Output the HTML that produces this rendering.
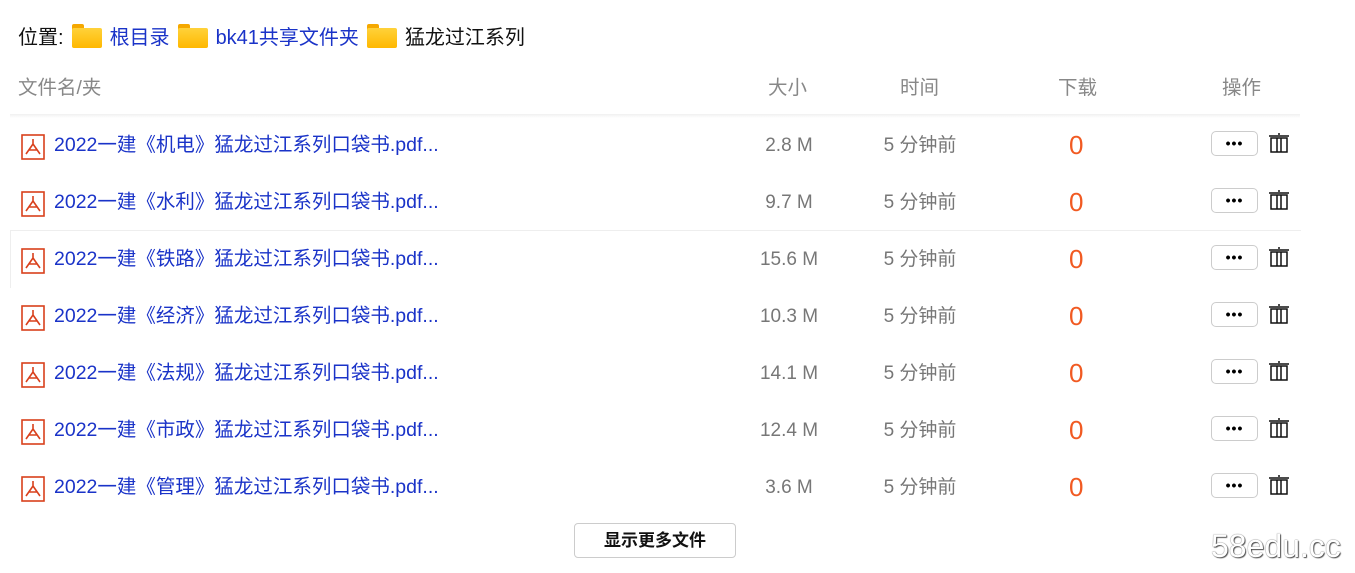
<!DOCTYPE html>
<html><head><meta charset="utf-8"><style>
body{margin:0;width:1355px;height:573px;background:#fff;font-family:"Liberation Sans","Noto Sans CJK SC",sans-serif;position:relative;overflow:hidden}
.a{position:absolute;white-space:nowrap}
.loc{top:21px;left:18px;font-size:20px;color:#111;display:flex;align-items:center;gap:6px}
.loc a{color:#1a33c8}
.fd{width:30px;height:24px;display:inline-block;position:relative;margin:0 2px}
.fd:before{content:"";position:absolute;left:0;top:0;width:12px;height:6px;background:#f5a800;border-radius:2px 2px 0 0}
.fd:after{content:"";position:absolute;left:0;top:4px;width:30px;height:20px;background:linear-gradient(#ffd23a,#ffb800);border-radius:2px}
.h{top:71px;font-size:19.5px;color:#888}
.sep{position:absolute;left:10px;top:114px;width:1290px;height:4px;background:linear-gradient(#f0f0f0,#fff)}
.row{position:absolute;left:0;width:1300px;height:57px}
.row .a{line-height:1}
.nm{left:54px;top:20px;font-size:19.5px;color:#1a33c8}
.ic{left:21px;top:18px}
.sz{width:100px;left:739px;text-align:center;top:20px;font-size:19px;color:#777}
.tm{width:120px;left:860px;text-align:center;top:20px;font-size:19px;color:#777}
.dl{left:1069px;top:16px;font-size:26px;color:#f15a22}
.row .bt{left:1211px;top:15px;width:47px;height:25px;border:1px solid #ccc;border-radius:5px;box-sizing:border-box;text-align:center;font-size:14px;line-height:22px;font-weight:bold;color:#000;letter-spacing:1px}
.tr{left:1268px;top:16px}
.more{left:574px;top:523px;width:162px;height:35px;border:1px solid #ccc;border-radius:4px;box-sizing:border-box;text-align:center;line-height:33px;font-weight:bold;font-size:17px;color:#111}
.wm{left:1211px;top:528px;font-size:32px;color:#fff;text-shadow:0 0 1px #333,1px 1px 1px #555}
</style></head><body>
<div class="a loc">位置: <span class="fd"></span><a>根目录</a><span class="fd"></span><a>bk41共享文件夹</a><span class="fd"></span><span>猛龙过江系列</span></div>
<div class="a h" style="left:18px">文件名/夹</div>
<div class="a h" style="left:768px">大小</div>
<div class="a h" style="left:900px">时间</div>
<div class="a h" style="left:1058px">下载</div>
<div class="a h" style="left:1222px">操作</div>
<div class="sep"></div>

<div class="row" style="top:116px">
<svg class="a ic" width="24" height="26" viewBox="0 0 24 26"><rect x="1" y="1" width="22" height="24" fill="none" stroke="#d9401c" stroke-width="1.6"/><path d="M12 5V10M12 10L5 20M12 10L19 20M8 16H16" stroke="#d9401c" stroke-width="1.6" fill="none"/></svg>
<div class="a nm">2022一建《机电》猛龙过江系列口袋书.pdf...</div><div class="a sz">2.8 M</div><div class="a tm">5 分钟前</div><div class="a dl">0</div><div class="a bt">•••</div>
<svg class="a tr" width="22" height="22" viewBox="0 0 22 22"><path d="M1 4H21M10 2H12M3 6H19V20H3ZM9 6V20M13 6V20" stroke="#111" stroke-width="1.5" fill="none"/></svg></div>

<div class="row" style="top:173px">
<svg class="a ic" width="24" height="26" viewBox="0 0 24 26"><rect x="1" y="1" width="22" height="24" fill="none" stroke="#d9401c" stroke-width="1.6"/><path d="M12 5V10M12 10L5 20M12 10L19 20M8 16H16" stroke="#d9401c" stroke-width="1.6" fill="none"/></svg>
<div class="a nm">2022一建《水利》猛龙过江系列口袋书.pdf...</div><div class="a sz">9.7 M</div><div class="a tm">5 分钟前</div><div class="a dl">0</div><div class="a bt">•••</div>
<svg class="a tr" width="22" height="22" viewBox="0 0 22 22"><path d="M1 4H21M10 2H12M3 6H19V20H3ZM9 6V20M13 6V20" stroke="#111" stroke-width="1.5" fill="none"/></svg></div>

<div style="position:absolute;left:10px;top:230px;width:1290px;height:57px;border-top:1px solid #eee;border-left:1px solid #eee"></div>
<div class="row" style="top:230px">
<svg class="a ic" width="24" height="26" viewBox="0 0 24 26"><rect x="1" y="1" width="22" height="24" fill="none" stroke="#d9401c" stroke-width="1.6"/><path d="M12 5V10M12 10L5 20M12 10L19 20M8 16H16" stroke="#d9401c" stroke-width="1.6" fill="none"/></svg>
<div class="a nm">2022一建《铁路》猛龙过江系列口袋书.pdf...</div><div class="a sz">15.6 M</div><div class="a tm">5 分钟前</div><div class="a dl">0</div><div class="a bt">•••</div>
<svg class="a tr" width="22" height="22" viewBox="0 0 22 22"><path d="M1 4H21M10 2H12M3 6H19V20H3ZM9 6V20M13 6V20" stroke="#111" stroke-width="1.5" fill="none"/></svg></div>

<div class="row" style="top:287px">
<svg class="a ic" width="24" height="26" viewBox="0 0 24 26"><rect x="1" y="1" width="22" height="24" fill="none" stroke="#d9401c" stroke-width="1.6"/><path d="M12 5V10M12 10L5 20M12 10L19 20M8 16H16" stroke="#d9401c" stroke-width="1.6" fill="none"/></svg>
<div class="a nm">2022一建《经济》猛龙过江系列口袋书.pdf...</div><div class="a sz">10.3 M</div><div class="a tm">5 分钟前</div><div class="a dl">0</div><div class="a bt">•••</div>
<svg class="a tr" width="22" height="22" viewBox="0 0 22 22"><path d="M1 4H21M10 2H12M3 6H19V20H3ZM9 6V20M13 6V20" stroke="#111" stroke-width="1.5" fill="none"/></svg></div>

<div class="row" style="top:344px">
<svg class="a ic" width="24" height="26" viewBox="0 0 24 26"><rect x="1" y="1" width="22" height="24" fill="none" stroke="#d9401c" stroke-width="1.6"/><path d="M12 5V10M12 10L5 20M12 10L19 20M8 16H16" stroke="#d9401c" stroke-width="1.6" fill="none"/></svg>
<div class="a nm">2022一建《法规》猛龙过江系列口袋书.pdf...</div><div class="a sz">14.1 M</div><div class="a tm">5 分钟前</div><div class="a dl">0</div><div class="a bt">•••</div>
<svg class="a tr" width="22" height="22" viewBox="0 0 22 22"><path d="M1 4H21M10 2H12M3 6H19V20H3ZM9 6V20M13 6V20" stroke="#111" stroke-width="1.5" fill="none"/></svg></div>

<div class="row" style="top:401px">
<svg class="a ic" width="24" height="26" viewBox="0 0 24 26"><rect x="1" y="1" width="22" height="24" fill="none" stroke="#d9401c" stroke-width="1.6"/><path d="M12 5V10M12 10L5 20M12 10L19 20M8 16H16" stroke="#d9401c" stroke-width="1.6" fill="none"/></svg>
<div class="a nm">2022一建《市政》猛龙过江系列口袋书.pdf...</div><div class="a sz">12.4 M</div><div class="a tm">5 分钟前</div><div class="a dl">0</div><div class="a bt">•••</div>
<svg class="a tr" width="22" height="22" viewBox="0 0 22 22"><path d="M1 4H21M10 2H12M3 6H19V20H3ZM9 6V20M13 6V20" stroke="#111" stroke-width="1.5" fill="none"/></svg></div>

<div class="row" style="top:458px">
<svg class="a ic" width="24" height="26" viewBox="0 0 24 26"><rect x="1" y="1" width="22" height="24" fill="none" stroke="#d9401c" stroke-width="1.6"/><path d="M12 5V10M12 10L5 20M12 10L19 20M8 16H16" stroke="#d9401c" stroke-width="1.6" fill="none"/></svg>
<div class="a nm">2022一建《管理》猛龙过江系列口袋书.pdf...</div><div class="a sz">3.6 M</div><div class="a tm">5 分钟前</div><div class="a dl">0</div><div class="a bt">•••</div>
<svg class="a tr" width="22" height="22" viewBox="0 0 22 22"><path d="M1 4H21M10 2H12M3 6H19V20H3ZM9 6V20M13 6V20" stroke="#111" stroke-width="1.5" fill="none"/></svg></div>

<div class="a more">显示更多文件</div>
<div class="a wm">58edu.cc</div>
</body></html>
